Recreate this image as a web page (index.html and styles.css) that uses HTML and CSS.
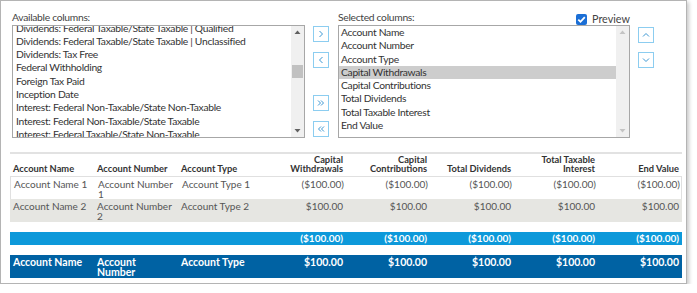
FILE: index.html
```html
<!DOCTYPE html>
<html lang="en">

<head>
    <meta charset="UTF-8">
    <title>Columns</title>
    <link rel="stylesheet" href="styles.css">
</head>

<body>
    <div class="frame">
        <div class="picker">
            <div class="panel">
                <div class="label">Available columns:</div>
                <div class="listbox">
                    <ul class="items scrolled">
                        <li>Dividends: Federal Taxable/State Taxable | Qualified</li>
                        <li>Dividends: Federal Taxable/State Taxable | Unclassified</li>
                        <li>Dividends: Tax Free</li>
                        <li>Federal Withholding</li>
                        <li>Foreign Tax Paid</li>
                        <li>Inception Date</li>
                        <li>Interest: Federal Non-Taxable/State Non-Taxable</li>
                        <li>Interest: Federal Non-Taxable/State Taxable</li>
                        <li>Interest: Federal Taxable/State Non-Taxable</li>
                    </ul>
                    <div class="scrollbar">
                        <svg class="arrow" width="13" height="12" viewBox="0 0 13 12"><path d="M3.5 8 L6.5 4.5 L9.5 8 Z" fill="#606060"/></svg>
                        <div class="track"><span class="thumb"></span></div>
                        <svg class="arrow" width="13" height="12" viewBox="0 0 13 12"><path d="M3.5 4 L6.5 7.5 L9.5 4 Z" fill="#606060"/></svg>
                    </div>
                </div>
            </div>

            <div class="moves">
                <button class="btn add"><svg width="14" height="14" viewBox="0 0 14 14"><polyline points="5.5,4 8.5,7 5.5,10"/></svg></button>
                <button class="btn"><svg width="14" height="14" viewBox="0 0 14 14"><polyline points="8.5,4 5.5,7 8.5,10"/></svg></button>
                <button class="btn all"><svg width="14" height="14" viewBox="0 0 14 14"><polyline points="4,4.5 6.5,7 4,9.5"/><polyline points="7,4.5 9.5,7 7,9.5"/></svg></button>
                <button class="btn"><svg width="14" height="14" viewBox="0 0 14 14"><polyline points="7,4.5 4.5,7 7,9.5"/><polyline points="10,4.5 7.5,7 10,9.5"/></svg></button>
            </div>

            <div class="panel">
                <div class="label label-row">
                    <span>Selected columns:</span>
                    <span class="preview">
                        <span class="check"><svg width="11" height="11" viewBox="0 0 11 11"><polyline points="2.3,5.6 4.5,7.8 8.8,3.2"/></svg></span>
                        Preview
                    </span>
                </div>
                <div class="listbox">
                    <ul class="items">
                        <li>Account Name</li>
                        <li>Account Number</li>
                        <li>Account Type</li>
                        <li class="selected">Capital Withdrawals</li>
                        <li>Capital Contributions</li>
                        <li>Total Dividends</li>
                        <li>Total Taxable Interest</li>
                        <li>End Value</li>
                    </ul>
                    <div class="scrollbar idle">
                        <svg class="arrow" width="13" height="12" viewBox="0 0 13 12"><path d="M3.5 8 L6.5 4.5 L9.5 8 Z" fill="#c4c4c4"/></svg>
                        <div class="track"></div>
                        <svg class="arrow" width="13" height="12" viewBox="0 0 13 12"><path d="M3.5 4 L6.5 7.5 L9.5 4 Z" fill="#c4c4c4"/></svg>
                    </div>
                </div>
            </div>

            <div class="moves order">
                <button class="btn up"><svg width="14" height="14" viewBox="0 0 14 14"><polyline points="4,8.5 7,5.5 10,8.5"/></svg></button>
                <button class="btn"><svg width="14" height="14" viewBox="0 0 14 14"><polyline points="4,5.5 7,8.5 10,5.5"/></svg></button>
            </div>
        </div>

        <div class="report">
            <div class="row head">
                <div>Account Name</div>
                <div>Account Number</div>
                <div>Account Type</div>
                <div class="num">Capital Withdrawals</div>
                <div class="num">Capital Contributions</div>
                <div class="num">Total Dividends</div>
                <div class="num">Total Taxable Interest</div>
                <div class="num">End Value</div>
            </div>
            <div class="row line first">
                <div>Account Name 1</div>
                <div>Account Number 1</div>
                <div>Account Type 1</div>
                <div class="num">($100.00)</div>
                <div class="num">($100.00)</div>
                <div class="num">($100.00)</div>
                <div class="num">($100.00)</div>
                <div class="num">($100.00)</div>
            </div>
            <div class="row line alt">
                <div>Account Name 2</div>
                <div>Account Number 2</div>
                <div>Account Type 2</div>
                <div class="num">$100.00</div>
                <div class="num">$100.00</div>
                <div class="num">$100.00</div>
                <div class="num">$100.00</div>
                <div class="num">$100.00</div>
            </div>
            <div class="row total">
                <div></div>
                <div></div>
                <div></div>
                <div class="num">($100.00)</div>
                <div class="num">($100.00)</div>
                <div class="num">($100.00)</div>
                <div class="num">($100.00)</div>
                <div class="num">($100.00)</div>
            </div>
            <div class="row grand">
                <div>Account Name</div>
                <div>Account Number</div>
                <div>Account Type</div>
                <div class="num">$100.00</div>
                <div class="num">$100.00</div>
                <div class="num">$100.00</div>
                <div class="num">$100.00</div>
                <div class="num">$100.00</div>
            </div>
        </div>
    </div>
</body>

</html>
```

FILE: styles.css
```css
body {
    margin: 0;
    background: #fff;
}

.frame {
    width: 687px;
    height: 284px;
    box-sizing: border-box;
    border: 1px solid #b4b4b4;
    box-shadow: 2px 2px 4px rgba(0, 0, 0, .22);
    background: #fff;
}

/* column picker */
.picker {
    display: flex;
    padding: 10px 0 0 11px;
    font-family: Lato, "Open Sans", sans-serif;
    font-size: 10.3px;
    letter-spacing: -0.3px;
    color: #333;
}

.panel {
    width: 293px;
}

.panel + .moves + .panel {
    width: 292px;
    margin-left: 9px;
}

.label {
    height: 14px;
    line-height: 12px;
    color: #444;
}

.label-row {
    display: flex;
    justify-content: space-between;
}

.preview {
    display: flex;
    align-items: center;
    gap: 5px;
    margin-top: 2px;
    font-size: 10.8px;
    letter-spacing: 0;
}

.check {
    width: 11px;
    height: 11px;
    border-radius: 2px;
    background: #1b6fd6;
    display: flex;
}

.check polyline {
    fill: none;
    stroke: #fff;
    stroke-width: 1.8;
}

.listbox {
    height: 113px;
    box-sizing: border-box;
    border: 1px solid #a7a7a7;
    display: flex;
    overflow: hidden;
}

.items {
    flex: 1;
    margin: 0;
    padding: 0;
    list-style: none;
    overflow: hidden;
}

.items li {
    height: 13.3px;
    line-height: 13.3px;
    padding-left: 2px;
    white-space: nowrap;
}

.items.scrolled {
    margin-top: -4.5px;
}

.items.scrolled li {
    padding-left: 3px;
}

.items li.selected {
    background: #cdcdcd;
}

.scrollbar {
    width: 13px;
    background: #f0f0f0;
    display: flex;
    flex-direction: column;
}

.arrow {
    display: block;
}

.track {
    flex: 1;
    padding: 27px 1px 0;
}

.thumb {
    display: block;
    height: 13px;
    background: #c1c1c1;
}

/* move buttons */
.moves {
    display: flex;
    flex-direction: column;
    margin-left: 8px;
}

.btn {
    width: 16px;
    height: 16px;
    padding: 0;
    margin: 10px 0 0;
    border: 1px solid #8ccdf0;
    background: #fff;
    display: flex;
    align-items: center;
    justify-content: center;
}

.btn polyline {
    fill: none;
    stroke: #3b97d3;
    stroke-width: 1;
}

.btn.add {
    margin-top: 15px;
}

.btn.all {
    margin-top: 27px;
}

.order .btn.up {
    margin-top: 16px;
}

.order .btn + .btn {
    margin-top: 9px;
}

/* preview table */
.report {
    margin: 14px 0 0 9px;
    width: 672px;
    border-top: 2px solid #e2e2e2;
    font-family: Lato, "Open Sans", sans-serif;
    font-size: 10px;
    color: #555;
}

.row {
    display: grid;
    grid-template-columns: repeat(8, 84px);
}

.row > div {
    padding: 0 3px;
    line-height: 10px;
}

.row .num {
    text-align: right;
}

.head {
    height: 21px;
    align-items: end;
    font-size: 9.3px;
    font-weight: bold;
    color: #333;
    padding-bottom: 3px;
    box-sizing: border-box;
    height: 22px;
}

.head > div {
    line-height: 9px;
}

.line {
    height: 23px;
    padding-top: 2px;
    box-sizing: border-box;
}

.first {
    border: 1px solid #e0e0e0;
    border-bottom: 0;
}

.alt {
    background: #e6e6e2;
}

.total,
.grand {
    font-weight: bold;
    color: #fff;
}

.total {
    margin-top: 10px;
    height: 13px;
    background: #0d99da;
    padding-top: 1px;
    box-sizing: border-box;
}

.grand {
    margin-top: 10px;
    height: 23px;
    background: #0062a3;
    padding-top: 2px;
    box-sizing: border-box;
    font-size: 10.5px;
}
```
